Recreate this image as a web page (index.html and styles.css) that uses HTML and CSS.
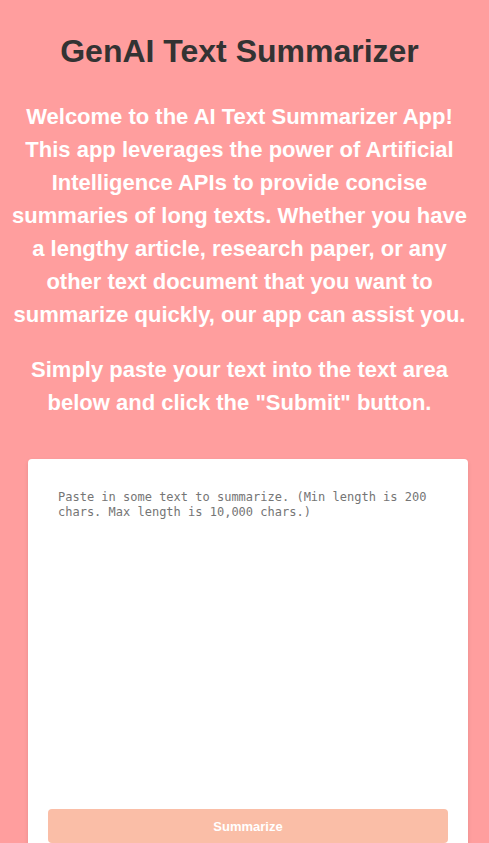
FILE: index.html
```html
<!DOCTYPE html>
<html lang="en">
<head>
<meta charset="utf-8">
<meta name="viewport" content="width=device-width, initial-scale=1">
<title>GenAI Text Summarizer</title>
<link rel="stylesheet" href="styles.css">
</head>
<body>
<main class="page">
<h1 class="title">GenAI Text Summarizer</h1>
<p class="intro">Welcome to the AI Text Summarizer App! This app leverages the power of Artificial Intelligence APIs to provide concise summaries of long texts. Whether you have a lengthy article, research paper, or any other text document that you want to summarize quickly, our app can assist you.</p>
<p class="intro">Simply paste your text into the text area below and click the "Submit" button.</p>
<form class="card">
<textarea class="source" aria-label="Text to summarize" placeholder="Paste in some text to summarize. (Min length is 200 chars. Max length is 10,000 chars.)"></textarea>
<button class="submit" type="button" disabled>Summarize</button>
</form>
</main>
</body>
</html>
```
FILE: styles.css
```css
* {
  box-sizing: border-box;
}

html {
  scrollbar-width: none;
}

body {
  margin: 0;
  background: #ff9e9e;
  font-family: "Liberation Sans", Arial, sans-serif;
}

.page {
  padding: 24px 18px 0 8px;
  text-align: center;
}

.title {
  margin: 0 0 22px;
  font-size: 32px;
  line-height: 54px;
  color: #333;
}

.intro {
  margin: 0 0 22px;
  font-size: 22px;
  font-weight: bold;
  line-height: 33px;
  color: #fff;
}

.card {
  display: flex;
  flex-direction: column;
  margin: 40px 3px 0 20px;
  padding: 20px;
  border-radius: 4px;
  background: #fff;
  box-shadow: 0 2px 4px rgba(0, 0, 0, 0.1);
}

.source {
  height: 320px;
  margin-bottom: 10px;
  padding: 11px 10px;
  border: 0;
  resize: none;
  outline: none;
  background: transparent;
  font-family: "DejaVu Sans Mono", monospace;
  font-size: 12px;
  line-height: 15px;
}

.source::placeholder {
  color: #757575;
}

.submit {
  height: 34px;
  border: 0;
  border-radius: 4px;
  background: #fabea7;
  font-family: inherit;
  font-size: 13px;
  font-weight: bold;
  color: #fff;
}
```
